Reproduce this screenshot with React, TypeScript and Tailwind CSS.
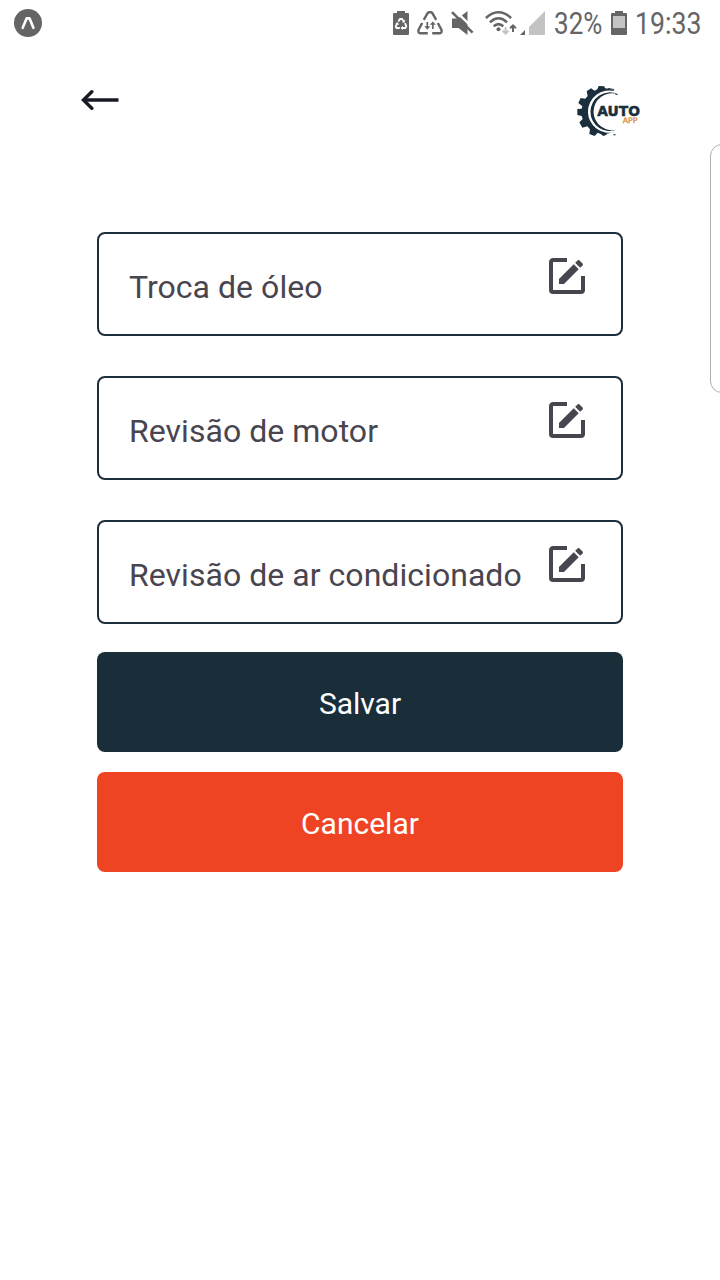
import React from "react";

const services = ["Troca de óleo", "Revisão de motor", "Revisão de ar condicionado"];

function ExpoBadge() {
  return (
    <svg width="28" height="28" viewBox="0 0 28 28">
      <circle cx="14" cy="14" r="14" fill="#656565" />
      <path d="M8.7 18.8 L12.6 9.4 H15.6 L19.4 18.8" fill="none" stroke="#fff" strokeWidth="2.6" strokeLinecap="round" strokeLinejoin="round" />
    </svg>
  );
}

function RecycleBattery() {
  return (
    <svg width="16" height="24" viewBox="0 0 16 24" fill="none">
      <path d="M4 0H12V2H15Q16 2 16 3V23Q16 24 15 24H1Q0 24 0 23V3Q0 2 1 2H4Z" fill="#656565" />
      <path d="M5.3 10.5L7 8H9L10.9 10.8M12 12.2L13.3 15L12.4 17H8.8M6.8 17H3.5L2.7 15.4L4.2 12.5" stroke="#fff" strokeWidth="1.8" />
      <path d="M9 11.7L12 11.3L11.7 8.5ZM9.9 14.8L7.6 17L9.9 19ZM2.4 12.2L5 11.2L6 14Z" fill="#fff" />
    </svg>
  );
}

function DataSaver() {
  return (
    <svg width="26" height="24" viewBox="0 0 26 24" fill="none" stroke="#656565" strokeWidth="2.4">
      <path d="M6.8 8.8L10.6 2.2Q11.1 1.3 12 1.3H14Q14.9 1.3 15.4 2.2L19.2 8.8" />
      <path d="M5.2 12L1.6 18.6Q.6 21.9 3.5 22.3H10.8" />
      <path d="M20.8 12L24.4 18.6Q25.4 21.9 22.5 22.3H15.2" />
      <path d="M10.3 11V17M15.8 18V12" strokeWidth="1.7" />
      <path d="M7.3 15.2H13.3L10.3 18.8ZM12.8 13.8H18.8L15.8 10.5Z" fill="#656565" stroke="none" />
    </svg>
  );
}

function Muted() {
  return (
    <svg width="24" height="24" viewBox="0 0 24 24">
      <path d="M1 7.5H7L16.5 0V24L7.5 17H1Z" fill="#656565" />
      <path d="M3 -1.5L24.5 19.5" stroke="#fff" strokeWidth="2.4" />
      <path d="M1 1.2L21.6 21.7" stroke="#656565" strokeWidth="2.6" />
    </svg>
  );
}

function Wifi() {
  return (
    <svg width="32" height="25" viewBox="0 0 32 25" fill="none" stroke="#656565" strokeWidth="2.5">
      <path d="M.9 7Q13.5 -4.4 26.1 7M4.9 11.3Q13.5 3.2 22.1 11.3M8.7 15.3Q13.5 11 18.3 15.3" />
      <circle cx="13.5" cy="18.2" r="2" fill="#656565" stroke="none" />
      <path d="M20.6 16V22M17.7 19.7L20.6 22.6L23.5 19.7" stroke="#c3c3c3" strokeWidth="2" />
      <path d="M28 21V15M25.1 17.3L28 14.4L30.9 17.3" strokeWidth="2" />
    </svg>
  );
}

function Signal() {
  return (
    <svg width="26" height="24" viewBox="0 0 26 24">
      <path d="M0 24L5 19V24Z" fill="#656565" />
      <path d="M9 24V16L25 0V24Z" fill="#c3c3c3" />
    </svg>
  );
}

function Battery() {
  return (
    <svg width="16" height="24" viewBox="0 0 16 24">
      <path d="M4 0H12V2H15Q16 2 16 3V23Q16 24 15 24H1Q0 24 0 23V3Q0 2 1 2H4Z" fill="#656565" />
      <path d="M2 5H14V17H2Z" fill="#c3c3c3" />
    </svg>
  );
}

function BackArrow() {
  return (
    <svg width="38" height="22" viewBox="0 0 38 22" fill="none" stroke="#171923" strokeWidth="3.4">
      <path d="M2.5 11H37.5" />
      <path d="M10.8 2.8L2.4 11L10.8 19.2" strokeLinecap="round" />
    </svg>
  );
}

function Logo() {
  return (
    <svg width="90" height="70" viewBox="0 0 270 210">
      <g fill="#1a2e3b">
        <path d="M145 46C137 42 129 40 120 40L118 34L101 33L97 43L89 47L78 40L65 49L68 63L61 71L47 69L40 84L52 94L50 101L37 102V120L50 123L53 132L43 142L52 158L67 154L75 163L73 177L89 183L98 173L107 177L115 183L125 179V176L150 171A63.5 63.5 0 1 1 150 49Z" />
        <path d="M158 57A58 58 0 1 0 158 163A55.6 55.6 0 1 1 158 57Z" />
        <path d="M129 39L147 42V45L130 42ZM151 55L158 58V61L150 58ZM145 178H152V181H145Z" />
      </g>
      <text x="97" y="122.5" fontFamily="DejaVu Sans, sans-serif" fontWeight="700" fontSize="41" textLength="128" lengthAdjust="spacingAndGlyphs" fill="#1a2e3b" stroke="#1a2e3b" strokeWidth="1.5">AUTO</text>
      <text x="173" y="143.5" fontFamily="DejaVu Sans, sans-serif" fontSize="23" textLength="44" lengthAdjust="spacingAndGlyphs" fill="#dc8a3a" stroke="#dc8a3a" strokeWidth="1">APP</text>
    </svg>
  );
}

function EditIcon() {
  return (
    <svg width="48" height="48" viewBox="0 0 24 24" fill="#49454f">
      <path d="M5,3C3.89,3 3,3.89 3,5V19A2,2 0 0,0 5,21H19A2,2 0 0,0 21,19V12H19V19H5V5H12V3H5M17.78,4C17.61,4 17.43,4.07 17.3,4.2L16.08,5.41L18.58,7.91L19.8,6.7C20.06,6.44 20.06,6 19.8,5.75L18.25,4.2C18.12,4.07 17.95,4 17.78,4M15.37,6.12L8,13.5V16H10.5L17.87,8.62L15.37,6.12Z" />
    </svg>
  );
}

export default function App() {
  return (
    <div className="relative h-[1280px] w-[720px] overflow-hidden bg-white font-['Roboto',sans-serif]">
      <header className="flex h-[46px] items-center pl-[14px] text-[31px] leading-[46px] text-[#656565]">
        <ExpoBadge />
        <div className="ml-[351px] flex h-full items-center">
          <RecycleBattery />
          <div className="ml-2"><DataSaver /></div>
          <div className="ml-2"><Muted /></div>
          <div className="ml-[10px]"><Wifi /></div>
          <div className="ml-[3px]"><Signal /></div>
          <span className="ml-2 mt-px w-[49px] origin-left scale-x-[0.84] whitespace-nowrap">32%</span>
          <div className="ml-2"><Battery /></div>
          <span className="ml-2 mt-px w-[67px] origin-left scale-x-[0.86] whitespace-nowrap">19:33</span>
        </div>
      </header>

      <nav className="flex h-[186px] items-start justify-between pl-[81px] pr-[65px] pt-[29px]">
        <button className="mt-[14px]" aria-label="Voltar"><BackArrow /></button>
        <Logo />
      </nav>

      <main className="mx-[97px] flex flex-col">
        <div className="flex flex-col gap-10">
          {services.map((name) => (
            <div key={name} className="flex h-[104px] items-start justify-between rounded-lg border-2 border-[#1a2e3b] pl-[30px] pr-[30px]">
              <span className="mt-[33px] whitespace-nowrap text-[32px] leading-[40px] tracking-[0.04px] text-[#49454f]">{name}</span>
              <span className="-ml-4 mt-[18px] shrink-0"><EditIcon /></span>
            </div>
          ))}
        </div>
        <button className="mt-7 h-[100px] rounded-lg bg-[#1a2e3a] pt-[3px] text-[30px] text-white">Salvar</button>
        <button className="mt-5 h-[100px] rounded-lg bg-[#ef4423] pt-[3px] text-[30px] text-white">Cancelar</button>
      </main>

      <div className="absolute left-[710px] top-[144px] h-[249px] w-5 rounded-l-[12px] border border-[#b0b0b0]" />
    </div>
  );
}
